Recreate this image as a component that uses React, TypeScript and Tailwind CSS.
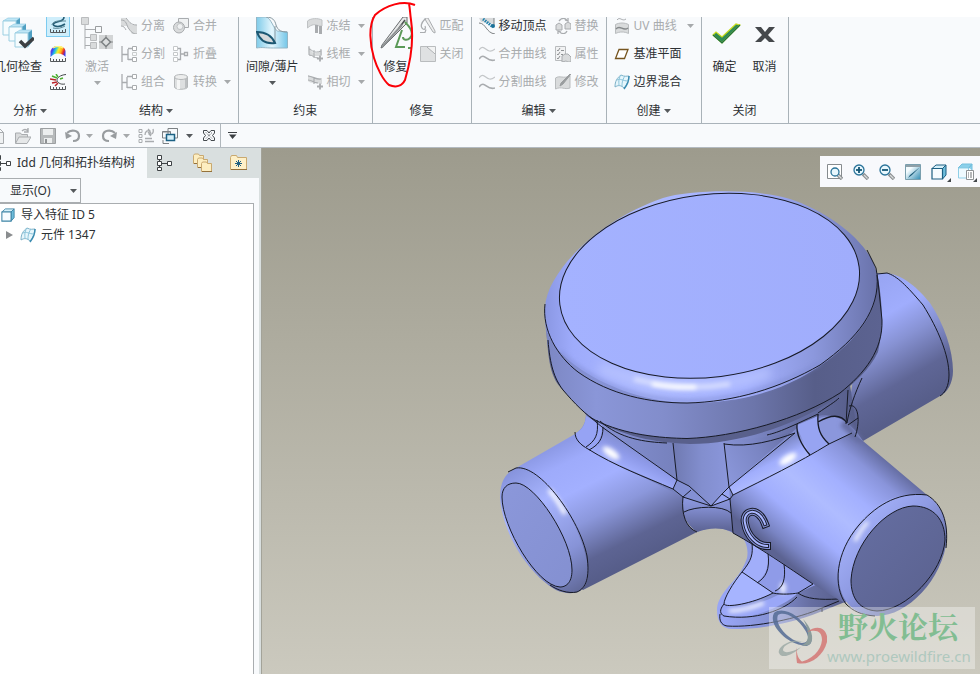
import React from "react";

type Kids = { children?: React.ReactNode };

const G = "#a9acaf";
const GL = "#d9dbdc";
const D = "#454a4e";
const T = "#1d5f82";

function Ico({ children, size = 16 }: Kids & { size?: number }) {
  return (
    <svg width={size} height={size} viewBox={`0 0 ${size} ${size}`} fill="none" className="block shrink-0" aria-hidden="true">
      {children}
    </svg>
  );
}

function Caret({ dim = false }: { dim?: boolean }) {
  return (
    <svg width="7" height="4" viewBox="0 0 7 4" className="block shrink-0" aria-hidden="true">
      <path d="M0 0h7L3.500 4z" fill={dim ? "#a6a9ab" : "#55595c"} />
    </svg>
  );
}

function Small({ icon, text, dim = true, caret = false }: { icon: React.ReactNode; text: string; dim?: boolean; caret?: boolean }) {
  return (
    <button type="button" className={`flex h-7 items-center gap-1 whitespace-nowrap ${dim ? "text-[#a9acae]" : "text-[#2d3134]"}`}>
      {icon}
      <span className={caret ? "mr-auto pr-[3px]" : ""}>{text}</span>
      {caret && <Caret dim={dim} />}
    </button>
  );
}

function Col({ children, wide = "" }: Kids & { wide?: string }) {
  return <div className={`-mt-[5px] flex flex-col ${wide}`}>{children}</div>;
}

function Big({ icon, text, dim = false, caret = false, wide = "min-w-8" }: { icon: React.ReactNode; text: string; dim?: boolean; caret?: boolean; wide?: string }) {
  return (
    <button type="button" className={`flex h-[74px] flex-col items-center whitespace-nowrap ${wide} ${dim ? "text-[#a9acae]" : "text-[#2d3134]"}`}>
      {icon}
      <span className="mt-2 leading-5">{text}</span>
      {caret && <span className="mt-1"><Caret dim={dim} /></span>}
    </button>
  );
}

function Group({ label, caret = false, body, foot = "", children }: Kids & { label: string; caret?: boolean; body: string; foot?: string }) {
  return (
    <section className="flex shrink-0 flex-col border-r border-[#a9b2b8]" aria-label={label}>
      <div className={`flex h-[82px] ${body}`}>{children}</div>
      <div className={`flex h-6 items-center justify-center gap-[3px] text-[#2d3134] ${foot}`}>
        {label}
        {caret && <Caret />}
      </div>
    </section>
  );
}

/* ---------- ribbon icons ---------- */

const GeometryCheck = () => (
  <Ico size={32}>
    {[[0, -3], [6, 3], [12, 9]].map(([x, y]) => (
      <g key={x} transform={`translate(${x} ${y})`}>
        <path d="M1 7l5-3h12l-4 3z" fill="#bfe6f5" stroke="#8cc8df" strokeWidth=".6" />
        <path d="M14 7l4-3v12l-4 5z" fill="#4f9fc2" />
        <path d="M1 7h13v14H1z" fill="#f6fcfe" stroke="#9ccfe2" />
      </g>
    ))}
    <path d="M18 24l5 5 9-8" stroke="#3c3f42" strokeWidth="3.500" />
  </Ico>
);

const Ruler = () => <path d="M.5 12v3.500h15V12M3.500 13v2M6.500 13v2M9.500 13v2M12.500 13v2" stroke="#54585b" />;

const Analysis1 = () => (
  <Ico>
    <path d="M14 0c0 4-4 4-7 5-4 1-5 3-2 4s7 0 10-2" stroke="#235b74" strokeWidth="1.600" />
    <path d="M16 4H9C5 4 2 6 2 8M3 11c4 1 9 0 12-2" stroke="#5d8797" />
    <Ruler />
  </Ico>
);

const Analysis2 = () => (
  <Ico>
    <defs>
      <linearGradient id="rainbow" x1="0" x2="1" y1=".3" y2=".6">
        <stop offset="0" stopColor="#a02ad0" />
        <stop offset=".15" stopColor="#3a4bef" />
        <stop offset=".32" stopColor="#20c6e8" />
        <stop offset=".5" stopColor="#f4f22a" />
        <stop offset=".7" stopColor="#ffb01a" />
        <stop offset=".85" stopColor="#e82a2a" />
        <stop offset="1" stopColor="#3a3bef" />
      </linearGradient>
    </defs>
    <path d="M.5 11V5C2 1 5 0 8 0s7 1 7.500 5v6C14 9 11 7.500 8 7.500S3 8.500 .5 11z" fill="url(#rainbow)" />
    <path d="M3 2c3-2 7-2 10 0" stroke="#fff47a" strokeWidth="1.200" />
    <Ruler />
  </Ico>
);

const Analysis3 = () => (
  <Ico>
    <path d="M16 .500C10 1 7 4 7 6s3 5 8 4" stroke="#44484b" />
    <path d="M6 0l2 3M2 2l5 2M13 4l-3 1" stroke="#4caf2e" strokeWidth="1.500" />
    <path d="M0 5l6 1M2 9l5-1M5 12l3-3" stroke="#b8242a" strokeWidth="1.500" />
    <Ruler />
  </Ico>
);

const Activate = () => (
  <Ico size={32}>
    <path d="M4 8v24M4 12.500h10M4 20.500h6M4 28.500h6" stroke={G} />
    <path d="M.5.500h7v7h-7zM9.500 17.500h6v6h-6zM9.500 25.500h6v6h-6z" fill={GL} stroke="#babcbe" />
    <path d="M14.500 9.500h6v6h-6z" fill="#f8fafc" stroke="#9a9d9f" />
    <path d="M18 18h14v14H18z" fill="#d3d5d6" />
    <path d="M25 18v14M18 25h14" stroke="#8d9092" />
    <path d="M25 20.500l4.500 4.500-4.500 4.500-4.500-4.500z" fill="#dcdedf" stroke="#7d8183" strokeWidth="1.500" />
  </Ico>
);

const Detach = () => (
  <Ico>
    <path d="M0 0h5l6 7h5v9h-5L6 8H0z" fill={GL} />
    <path d="M0 2c6 0 5 5 8 9s5 5 8 5M5 0c3 3 4 7 11 7M0 8c3 0 4 2 5 4" stroke={G} />
  </Ico>
);

const Split = () => (
  <Ico>
    <path d="M1 0v16M1 8.500h6M7 3v11M7 2.500h4M7 13.500h4" stroke={G} strokeWidth="1.300" />
    <path d="M11.500.500h4v4h-4zM11.500 11.500h4v4h-4z" fill="#fff" stroke={G} />
    <path d="M11.500 6.500h4v3h-4z" stroke="#c9cccd" />
  </Ico>
);

const Combine = () => (
  <Ico>
    <path d="M1 0v16M1 8.500h5M6 3v11M6 2.500h5M6 13.500h5" stroke={G} strokeWidth="1.300" />
    <path d="M11.500.500h4v4h-4zM11.500 11.500h4v4h-4z" fill="#fff" stroke={G} />
  </Ico>
);

const Merge = () => (
  <Ico>
    <path d="M5.500.500h10v9h-10z" fill="#eff1f2" stroke={G} />
    <circle cx="6" cy="9.500" r="5.500" fill={GL} stroke={G} />
    <circle cx="7" cy="8.500" r="3" fill="#eff1f2" stroke="#bfc2c4" />
  </Ico>
);

const Fold = () => (
  <Ico>
    <path d="M4 2.500h3.500v11H4M8 8h3" stroke={G} strokeWidth="1.300" />
    <path d="M.5.500h4v4h-4zM.5 6.500h4v3h-4zM.5 11.500h4v4h-4z" fill="#fff" stroke="#c5c8ca" />
    <path d="M11.500 6.500h3v3h-3z" fill="#fff" stroke={G} strokeWidth="1.300" />
  </Ico>
);

const Convert = () => (
  <Ico>
    <path d="M1.500 3v10c0 3 13 3 13 0V3z" fill="#dddfe0" stroke="#b4b7b9" />
    <path d="M4 4v11h3V4z" fill="#f5f6f6" />
    <path d="M12 4v10h2V4z" fill="#bcbfc1" />
    <ellipse cx="8" cy="3" rx="6.500" ry="2.500" fill="#eceded" stroke="#b4b7b9" />
  </Ico>
);

const Gap = () => (
  <Ico size={32}>
    <defs>
      <linearGradient id="gapfill" x1="0" x2="1">
        <stop offset="0" stopColor="#7fcbe9" />
        <stop offset=".5" stopColor="#e4f6fd" />
        <stop offset="1" stopColor="#74c6e8" />
      </linearGradient>
    </defs>
    <path d="M.5 0h10c5 2 7 12 11 14l10 1v16h-14C8 31 7 30 .5 31z" fill="url(#gapfill)" stroke="#94b6c5" />
    <path d="M10 0c6 0 9 3 10 8 2 6 6 7 11 7M19 9v17" stroke="#87989f" />
    <path d="M1 15c6 0 14 2 18 11C11 27 4 24 1 15z" fill="#d6dadc" stroke="#1c5873" strokeWidth="2" />
  </Ico>
);

const Freeze = () => (
  <Ico>
    <path d="M.5 3C4 0 11 0 15 2v6h-3C8 6 5 6 .5 10z" fill={GL} stroke="#bfc2c4" />
    <path d="M8 7h3v8H8zM12 8h3v8h-3z" fill={G} />
  </Ico>
);

const Plus = () => <path d="M13 9.500v6M10 12.500h6" stroke={G} strokeWidth="1.800" />;

const Wireframe = () => (
  <Ico>
    <path d="M1 1c4 0 2 5 6 6s5-2 8-3v6H9C5 11 2 9 2 9z" fill={GL} />
    <path d="M2 0v9c4 0 5 3 9 3M2 3c4 1 4 5 12 2M7 4v8M14 3v6" stroke={G} />
    <Plus />
  </Ico>
);

const Tangent = () => (
  <Ico>
    <path d="M1 1l4 2c4 2 6 1 10 1v6l-7-1C4 9 2 8 1 7z" fill={GL} />
    <path d="M1 2c5 0 8 4 13 3M1 6c4 0 6 3 10 3M7 3v7" stroke={G} strokeWidth="1.200" />
    <Plus />
  </Ico>
);

const Repair = () => (
  <Ico size={32}>
    <path d="M23 0h4v6L3 30l-2 1 1-3z" fill="#e7e9e9" stroke="#686c6e" />
    <path d="M25 3l-6 8" stroke="#4e5254" strokeWidth="1.500" />
    <path d="M22 8L2 30" stroke="#8e9294" strokeWidth="2" />
    <path d="M25 5c6 6 9 12 5 16-3 3-7 2-7-1M22 13l-6 17h9M28 31h4" stroke="#5b9a58" strokeWidth="2" />
  </Ico>
);

const Match = () => (
  <Ico>
    <path d="M5 1C1 5 0 9 3 11c2 1 3-1 2-3M0 14.500h5l1-3" stroke={G} strokeWidth="1.200" />
    <path d="M5 0h3l7 13v2l-2-1L6 3z" fill="#eceded" stroke={G} />
  </Ico>
);

const CloseSurf = () => (
  <Ico>
    <path d="M.5.500h15v15H.5z" fill="#dfe1e2" stroke="#b9bcbe" />
    <path d="M7 1l8 8V1z" fill="#f2f3f3" />
    <path d="M7 1l8 7" stroke={G} />
  </Ico>
);

const MoveVertex = () => (
  <Ico>
    <path d="M0 0h15v6L2 4z" fill="#d8dadb" />
    <path d="M0 5c7 0 7 10 16 11M15 0v7" stroke="#7d8183" />
    <path d="M4 1l10 8" stroke="#1f7fab" strokeWidth="3" strokeDasharray="1.500 1" />
    <circle cx="14" cy="8" r="2" fill="#1b6f97" />
  </Ico>
);

const Waves = () => (
  <Ico>
    <path d="M0 4c6-8 7 6 16-1" stroke="#c4c7c9" strokeWidth="1.200" />
    <path d="M0 13c6-8 7 4 16 1" stroke={G} strokeWidth="1.600" />
  </Ico>
);

const Replace = () => (
  <Ico>
    <path d="M1 7l3-2 3 2v5H1zM10 6l3-2 3 2v5h-6z" fill={GL} stroke={G} />
    <path d="M4 3c3-4 7-3 8 0M12 13c-2 4-6 3-8 0M10 2l3 1V0M6 14l-3-1v3" stroke={G} strokeWidth="1.300" />
  </Ico>
);

const Property = () => (
  <Ico>
    <path d="M.5.500h10v14H.5z" fill="#f1f2f3" stroke="#b9bcbe" />
    <path d="M2 4l1 1 2-3M2 8l1 1 2-3M2 12l1 1 2-3M6 4.500h3M6 8.500h2" stroke="#8f9294" />
    <path d="M7 10l3-2h3l3 3v5h-3l-2-1-4 1z" fill={GL} stroke={G} />
  </Ico>
);

const Modify = () => (
  <Ico>
    <path d="M.5 4C5 1 8 5 15 2v12c-6 2-8-2-14.500 1z" fill={GL} stroke="#b9bcbe" />
    <path d="M16 0L8 10l-3 2 1-3 9-9" fill="#9a9d9f" stroke="#9a9d9f" />
  </Ico>
);

const UVCurve = () => (
  <Ico>
    <path d="M3 2c3-4 5 2 9-1" stroke={G} />
    <path d="M1.500 6.500c4-2 9-2 13 0v9c-4-2-9-2-13 0z" fill={GL} stroke="#b9bcbe" />
    <path d="M2 11c4-5 7 3 12-1" stroke="#85898b" strokeWidth="1.300" />
  </Ico>
);

const DatumPlane = () => (
  <Ico>
    <path d="M5 3.500h9L10.500 12.500h-9z" fill="#fff" stroke="#76551f" strokeWidth="1.300" />
  </Ico>
);

const Blend = () => (
  <Ico>
    <path d="M1 13C1 7 3 4 7 1c4 2 5 1 8 1-1 5-1 8-5 12-3-3-6-3-9-1z" fill="#e6f6fc" stroke="#7fb2c8" />
    <path d="M15 2c0 5-1 8-5 13" stroke="#3a8bb0" strokeWidth="1.500" />
    <path d="M3 6c3-2 6 1 11 1M7 1c-3 4-2 8-2 11M11 2c-3 4-3 8-3 11" stroke="#8ac3da" />
  </Ico>
);

const Confirm = () => (
  <Ico size={32}>
    <path d="M4 18l3-3 6 5L27 7l4 1-18 18z" fill="#2f8a55" stroke="#c8dc1c" strokeWidth="1.200" />
    <path d="M31 8L13 26 4 18" stroke="#1f7043" strokeWidth="1.200" />
  </Ico>
);

const Cancel = () => (
  <Ico size={32}>
    <path d="M6 10h6l4 5 4-5h6l-7 8 7 7h-6l-4-4-4 4H6l7-7z" fill="#45484b" />
  </Ico>
);

/* ---------- quick access and tree icons ---------- */

const Windows = () => (
  <Ico>
    <path d="M6 .500h9.500V10H6zM.5 3.500h8V10h-8z" fill="#f8fafc" stroke="#7c8184" />
    <path d="M6.500.500h9M.5 4h8" stroke="#7c8184" />
    <path d="M4.500 6.500h8v6h-8z" fill="#d6f0fa" stroke="#1b6184" strokeWidth="1.500" />
    <path d="M1 12v3.500h6" stroke="#7c8184" />
  </Ico>
);

const TreeIcon = () => (
  <Ico>
    <path d="M3.500 4v8M6 8.500h5" stroke="#3e4245" />
    <path d="M1.500.500h4v4h-4zM1.500 6.500h4v4h-4zM1.500 12.500h4v3h-4zM11.500 6.500h4v4h-4z" fill="#fff" stroke="#3e4245" />
  </Ico>
);

const Folders = () => (
  <Ico size={20}>
    {[0, 4, 8].map((n) => (
      <g key={n} transform={`translate(${n - 1} ${n})`}>
        <path d="M1.500 2.500l1-1.500h4l1 1.500h4v8h-10z" fill="#fdeec1" stroke="#c9a970" />
        <path d="M2 10.500h10" stroke="#94713b" />
      </g>
    ))}
  </Ico>
);

const Cube = ({ s = 13, edge = T }: { s?: number; edge?: string }) => (
  <svg width={s} height={s} viewBox="0 0 16 16" fill="none" className="block shrink-0" aria-hidden="true">
    <path d="M1 4.500l4-3.500h10l-3.500 3.500z" fill="#d5f0fa" stroke={edge} />
    <path d="M11.500 4.500L15 1v10l-3.500 4z" fill="#6ebddb" stroke={edge} />
    <path d="M1 4.500h10.500V15H1z" fill="#f6fcff" stroke={edge} strokeWidth="1.200" />
  </svg>
);

function Lens({ kind }: { kind: "fit" | "in" | "out" }) {
  const c = kind === "fit" ? 8 : 6;
  return (
    <Ico>
      {kind === "fit" && <path d="M.5.500h14v14H.5z" fill="#fff" stroke="#868b8e" />}
      <path d="M10 10l5 5" stroke="#8a8e90" strokeWidth="3.500" />
      <path d="M11 11l3.500 3.500" stroke="#d9dbdc" strokeWidth="1.200" />
      <circle cx={c} cy={c} r={kind === "fit" ? 4 : 5} fill="#e8f7fd" stroke="#2a7399" strokeWidth="1.300" />
      {kind !== "fit" && <path d="M3 6h6" stroke="#155675" strokeWidth="1.800" />}
      {kind === "in" && <path d="M6 3v6" stroke="#155675" strokeWidth="1.800" />}
    </Ico>
  );
}

const Repaint = () => (
  <Ico>
    <defs>
      <linearGradient id="repaintfill" x1="0" x2="1" y2="1">
        <stop offset=".3" stopColor="#f3fbfe" />
        <stop offset="1" stopColor="#2f8bb2" />
      </linearGradient>
    </defs>
    <path d="M.5.500h15v15H.5z" fill="url(#repaintfill)" stroke="#7a9fae" />
    <path d="M1 2h14" stroke="#8fa0a8" strokeWidth="2" />
    <path d="M15 3L7 11l-4 3 2-3z" fill="#1a5a78" />
  </Ico>
);

const Display = () => (
  <Ico size={18}>
    <path d="M1 5l4-4h10l-3 4zM12 5l3-4v6" fill="#8bd0ea" stroke="#74bfdd" />
    <path d="M1.500 5h10v10h-10z" fill="#effaff" stroke="#8fcfe7" />
    <path d="M9.500 7.500h7v9h-7z" fill="#fff" stroke="#8d9194" />
    <path d="M11 10h1M13 10h2M11 12h1M13 12h2M11 14h1M13 14h2" stroke="#6b6f72" />
  </Ico>
);

function QBtn({ label, children }: Kids & { label: string }) {
  return <button type="button" aria-label={label} className="flex h-5 shrink-0 items-center">{children}</button>;
}

/* ---------- the shaded solid ---------- */

const MARK = "M765 524C758 505 742 511 745 523C747 536 757 546 767 546";

function Model() {
  return (
    <svg viewBox="262 148 718 526" preserveAspectRatio="xMinYMin slice" className="block h-full w-full" role="img" aria-label="几何模型">
      <defs>
        <linearGradient id="cylL" gradientUnits="userSpaceOnUse" x1="545" y1="452" x2="607" y2="576">
          <stop offset="0" stopColor="#8d9ae6" /><stop offset=".14" stopColor="#9eabfb" /><stop offset=".35" stopColor="#a3b0ff" />
          <stop offset=".58" stopColor="#8b97db" /><stop offset=".84" stopColor="#5d6493" /><stop offset="1" stopColor="#565d89" />
        </linearGradient>
        <linearGradient id="cylR" gradientUnits="userSpaceOnUse" x1="890" y1="462" x2="798" y2="571">
          <stop offset="0" stopColor="#636b9f" /><stop offset=".14" stopColor="#8994da" /><stop offset=".34" stopColor="#a3b0ff" />
          <stop offset=".52" stopColor="#afbcff" /><stop offset=".72" stopColor="#a1aefe" /><stop offset=".9" stopColor="#7984c3" /><stop offset="1" stopColor="#5c6392" />
        </linearGradient>
        <linearGradient id="cylB" gradientUnits="userSpaceOnUse" x1="885" y1="273" x2="951" y2="386">
          <stop offset="0" stopColor="#98a5f3" /><stop offset=".28" stopColor="#a0adfd" /><stop offset=".5" stopColor="#8792d3" />
          <stop offset=".78" stopColor="#5f6696" /><stop offset="1" stopColor="#575e8a" />
        </linearGradient>
        <linearGradient id="side" gradientUnits="userSpaceOnUse" x1="546" y1="0" x2="882" y2="0">
          <stop offset="0" stopColor="#7c87c3" /><stop offset=".15" stopColor="#8a96d8" /><stop offset=".35" stopColor="#828dcb" />
          <stop offset=".62" stopColor="#6c75aa" /><stop offset=".8" stopColor="#575e89" /><stop offset="1" stopColor="#5c6391" />
        </linearGradient>
        <linearGradient id="rim" gradientUnits="userSpaceOnUse" x1="546" y1="0" x2="880" y2="0">
          <stop offset="0" stopColor="#8b98e4" /><stop offset=".08" stopColor="#9eabfb" /><stop offset=".3" stopColor="#acb9ff" />
          <stop offset=".6" stopColor="#a4b1ff" /><stop offset=".8" stopColor="#8c98dd" /><stop offset="1" stopColor="#6871a8" />
        </linearGradient>
        <linearGradient id="top" x1="0" x2="1"><stop offset="0" stopColor="#a4b2ff" /><stop offset="1" stopColor="#a0adfc" /></linearGradient>
        <linearGradient id="faceL" x1="0" x2="1" y2="1"><stop offset="0" stopColor="#8b97da" /><stop offset="1" stopColor="#8490d1" /></linearGradient>
        <linearGradient id="faceR" x1="0" x2="1" y2="1"><stop offset="0" stopColor="#666fa3" /><stop offset="1" stopColor="#5a618e" /></linearGradient>
        <linearGradient id="ringL" gradientUnits="userSpaceOnUse" x1="505" y1="475" x2="580" y2="593">
          <stop offset="0" stopColor="#8693dc" /><stop offset=".3" stopColor="#a8b5ff" /><stop offset=".7" stopColor="#8793d7" /><stop offset="1" stopColor="#5f6796" />
        </linearGradient>
        <linearGradient id="ringR" gradientUnits="userSpaceOnUse" x1="850" y1="510" x2="940" y2="590">
          <stop offset="0" stopColor="#a9b6ff" /><stop offset=".45" stopColor="#8f9be3" /><stop offset="1" stopColor="#565d89" />
        </linearGradient>
        <linearGradient id="neck" gradientUnits="userSpaceOnUse" x1="590" y1="0" x2="860" y2="0">
          <stop offset="0" stopColor="#8793d6" /><stop offset=".3" stopColor="#7782be" /><stop offset=".5" stopColor="#8a96da" />
          <stop offset=".75" stopColor="#6871a7" /><stop offset="1" stopColor="#555c87" />
        </linearGradient>
        <linearGradient id="web" gradientUnits="userSpaceOnUse" x1="673" y1="0" x2="730" y2="0">
          <stop offset="0" stopColor="#6f79b1" /><stop offset=".5" stopColor="#828ece" /><stop offset="1" stopColor="#8b97dc" />
        </linearGradient>
        <linearGradient id="webR" gradientUnits="userSpaceOnUse" x1="725" y1="470" x2="795" y2="433">
          <stop offset="0" stopColor="#8a96d9" /><stop offset=".5" stopColor="#7a85c3" /><stop offset="1" stopColor="#636b9f" />
        </linearGradient>
        <linearGradient id="saddleR" gradientUnits="userSpaceOnUse" x1="768" y1="450" x2="780" y2="474">
          <stop offset="0" stopColor="#7f8bcb" /><stop offset=".5" stopColor="#a1aefd" /><stop offset="1" stopColor="#b0bcff" />
        </linearGradient>
        <linearGradient id="saddleL" gradientUnits="userSpaceOnUse" x1="645" y1="448" x2="632" y2="474">
          <stop offset="0" stopColor="#808ccd" /><stop offset=".5" stopColor="#8f9bea" /><stop offset="1" stopColor="#a3b0ff" />
        </linearGradient>
        <linearGradient id="arch" gradientUnits="userSpaceOnUse" x1="0" y1="490" x2="0" y2="532">
          <stop offset="0" stopColor="#97a4f0" /><stop offset=".45" stopColor="#808bcd" /><stop offset="1" stopColor="#5b6291" />
        </linearGradient>
        <linearGradient id="foot" gradientUnits="userSpaceOnUse" x1="725" y1="0" x2="840" y2="0">
          <stop offset="0" stopColor="#98a5f5" /><stop offset=".4" stopColor="#8591d4" /><stop offset=".75" stopColor="#666ea1" /><stop offset="1" stopColor="#5a618f" />
        </linearGradient>
        <filter id="soft" filterUnits="userSpaceOnUse" x="490" y="180" width="480" height="460"><feGaussianBlur stdDeviation="2" /></filter>
        <filter id="soft2" filterUnits="userSpaceOnUse" x="490" y="180" width="480" height="460"><feGaussianBlur stdDeviation="5" /></filter>
      </defs>

      {/* rear cylinder */}
      <path d="M870 273L887 273C900 275 914 283 930 303C944 324 953 350 953 371C953 383 947 393 940 396L863 441L845 430z" fill="url(#cylB)" />
      <path d="M877 274L887 273C897 276 906 285 923 305C938 329 949 355 949 375C949 386 945 393 940 396" fill="none" stroke="#171a26" />

      {/* foot */}
      <path d="M738 530C745 540 749 547 747 558C742 572 736 578 728 587C720 597 717 603 717 610C717 623 723 629 732 629C755 630 790 624 820 612L845 602L800 560z" fill="url(#foot)" />
      <path d="M742 572C750 565 753 552 752 541L800 570L820 583L798 593L773 593z" fill="#8f9be8" />
      <path d="M768 550C770 570 763 577 757 583L742 572C752 562 753 552 752 541z" fill="#a1aefa" />
      <path d="M742 572L773 593C755 602 740 605 726 606C720 602 733 579 742 572z" fill="#a6b4ff" />
      <path d="M726 608C745 608 765 602 780 594L798 593C786 605 755 618 737 617C726 617 719 615 720 608z" fill="#9aa7f7" />
      <path d="M729 611C742 611 753 607 764 603" stroke="#fff" strokeWidth="3" fill="none" filter="url(#soft)" />
      <ellipse cx="783" cy="588" rx="3" ry="6" fill="#eef1ff" filter="url(#soft)" />
      <g fill="none" stroke="#171a26">
        <path d="M752 543C753 554 752 560 742 572C733 583 724 598 724 604C726 608 752 604 773 593L742 572" />
        <path d="M773 593C782 595 792 594 798 593L813 584M768 553C770 570 766 577 757 583M784 564C786 579 783 588 775 591" />
        <path d="M724 604C719 610 720 614 724 616C755 621 785 610 797 597M798 593C806 599 820 600 838 599" />
        <path d="M720 614C719 620 721 625 727 626C755 628 800 618 822 608L839 601M822 608V612" />
      </g>

      {/* neck and central web */}
      <path d="M585 410C588 420 583 429 575 434L590 470L680 500L684 515L697 532C707 528 716 527 724 529L750 540L860 450L850 385z" fill="url(#neck)" />
      <path d="M673 441H724L730 488L711 506L689 487L677 480z" fill="url(#web)" />
      <path d="M724 441L767 437L795 432L729 487z" fill="url(#webR)" />
      <path d="M677 480L689 486L711 506L683 497L673 489z" fill="#8390d4" />
      <path d="M680 496L711 506L731 499L745 540C728 526 712 527 697 532C686 525 681 512 680 496z" fill="url(#arch)" />
      <path d="M711 506L722 494L729 487L734 494L730 499z" fill="#99a6f3" />

      {/* left cylinder */}
      <path d="M516 468L575 434L588 449C615 465 647 478 683 497C682 515 687 528 697 532L583 590L550 570z" fill="url(#cylL)" />
      <path d="M586 416C585 427 581 430 575 434C577 441 582 445 588 449C620 467 648 477 673 489L677 480L602 425z" fill="url(#saddleL)" />
      <path d="M586 416C585 427 581 430 575 434C577 441 582 445 588 449C599 443 603 435 602 425z" fill="#96a3f4" />
      <ellipse cx="611" cy="453" rx="10" ry="4" transform="rotate(35 611 453)" fill="#fff" filter="url(#soft)" />
      <path d="M516 468C503 474 500 485 500 498C503 537 531 576 556 590C565 594 574 594 580 591C588 586 589 575 588 567C584 536 555 479 524 468z" fill="url(#ringL)" />
      <path d="M549 490C556 498 561 506 565 514" stroke="#fff" strokeWidth="4" fill="none" filter="url(#soft)" />
      <path d="M516 483C535 483 572 539 572 570C572 584 565 587 560 587C537 586 502 527 502 497C502 488 507 483 516 483z" fill="url(#faceL)" stroke="#171a26" />
      <path d="M508 472L516 468C540 464 580 520 587 556C590 578 586 588 577 592C568 594 557 590 550 585" fill="none" stroke="#171a26" />

      {/* right cylinder */}
      <path d="M729 487L795 432L818 416C835 412 848 420 863 441L927 495L845 603C810 585 775 555 733 533z" fill="url(#cylR)" />
      <path d="M818 419C830 413 847 416 863 441L852 433L829 444C821 435 818 430 818 419z" fill="#8b97dc" />
      <path d="M846 418L863 441L858 442L840 426z" fill="#666ea3" filter="url(#soft)" />
      <path d="M797 425L818 416C818 430 821 437 829 444L810 455C802 445 797 436 797 425z" fill="#97a4f2" />
      <path d="M733 495L729 487L797 428L810 455z" fill="url(#saddleR)" />
      <ellipse cx="788" cy="459" rx="10" ry="4" transform="rotate(-32 788 459)" fill="#fff" filter="url(#soft)" />
      <path d="M927 495C944 506 947 524 947 538C943 580 907 616 877 616C852 615 839 600 839 575C840 533 877 493 913 495z" fill="url(#ringR)" />
      <path d="M855 541C859 533 863 527 868 522" stroke="#fff" strokeWidth="3" fill="none" filter="url(#soft)" />
      <path d="M913 506C934 506 945 520 945 540C943 572 906 611 877 611C860 610 851 599 851 580C853 544 886 507 913 506z" fill="url(#faceR)" stroke="#171a26" />
      <path d="M927 495C895 491 873 509 859 525C835 553 833 587 846 604C853 611 861 615 875 616M927 495C942 504 949 522 946 548" fill="none" stroke="#171a26" />

      {/* cap */}
      <path d="M546 320C548 370 552 380 566 393C578 403 582 412 590 418C630 440 665 443 690 444C740 444 795 425 833 400C855 383 870 369 878 352C884 325 882 300 878 278z" fill="#59608c" />
      <path d="M545 320C548 355 552 375 563 390C574 403 587 416 595 420C625 435 660 438 687 438.500C735 437 800 419 840 393C865 373 883 350 882 320L877 277z" fill="url(#side)" />
      <path d="M545 307C547 272 597 221 663 198C690 190 755 188 790 199C830 212 875 246 877 277C882 323 835 359 800 378C765 396 730 403 687 403C622 401 563 365 550 338C545 328 544 318 545 307z" fill="url(#rim)" />
      <path d="M560 352C600 390 650 400 687 401C735 400 780 386 820 363" stroke="#7f8bd0" strokeWidth="4" fill="none" filter="url(#soft)" opacity=".6" />
      <path d="M600 368C650 389 720 392 770 372" stroke="#b9c4ff" strokeWidth="8" fill="none" filter="url(#soft2)" />
      <path d="M634 379C665 387 700 389 730 384" stroke="#d5dcff" strokeWidth="5" fill="none" filter="url(#soft)" />
      <path d="M652 384C668 387 680 388 696 387" stroke="#fff" strokeWidth="4" fill="none" filter="url(#soft)" />
      <ellipse cx="709.500" cy="285.800" rx="150.800" ry="91.300" transform="rotate(-7.200 709.500 285.800)" fill="url(#top)" stroke="#171a26" />
      <g fill="none" stroke="#171a26">
        <path d="M545 304C542 330 557 356 578 372C610 395 650 403 687 403C735 402 780 388 820 365C858 338 880 310 877 275" />
        <path d="M548 340C550 365 554 378 563 390C574 403 587 416 595 420C625 435 660 438 687 438.500C735 437 800 419 840 393C865 373 883 350 882 320L878 281L876 268L867 250" />
      </g>

      {/* feature edges */}
      <g fill="none" stroke="#171a26">
        <path d="M575 432C575 440 581 445 588 449C615 466 645 477 673 489L683 497C681 514 686 528 697 532" />
        <path d="M590 417L602 427L677 480L689 486L711 506L683 497L691 490M673 489L677 480L673 443" />
        <path d="M597 420C599 435 595 441 586 447M603 427C603 440 598 445 589 450M600 421C620 439 645 442 667 443" />
        <path d="M684 512C695 506 723 505 731 513M711 506L722 494L729 487L795 433M711 506L730 499L733 495L729 487L724 443M722 494L730 499L733 533" />
        <path d="M733 495C765 479 798 463 829 444L852 433M724 444C750 448 775 440 795 433M767 435C780 432 790 427 818 414" />
        <path d="M797 424C796 437 803 447 810 455M818 414C817 428 820 436 829 444M818 422C830 415 841 414 847 423" strokeWidth="1.300" />
        <path d="M848 390L846 424M862 378C855 393 849 410 847 423M849 406C858 403 861 420 855 437M848 425L858 418M818 413C828 406 835 402 839 398" />
        <path d="M733 533C762 549 786 566 813 584" />
      </g>
      {/* embossed mark on the cylinder */}
      <g fill="none" strokeLinecap="square">
        <path d={MARK} stroke="#171a26" strokeWidth="8" />
        <path d={MARK} stroke="#8793d9" strokeWidth="6" />
        <path d={MARK} stroke="#1d2133" strokeWidth="4" />
        <path d={MARK} stroke="#a9b6ff" strokeWidth="2" />
      </g>
    </svg>
  );
}

export default function App() {
  return (
    <div
      className="relative flex h-screen min-h-[480px] flex-col overflow-hidden bg-white text-[12px] leading-4 text-[#2d3134]"
      style={{ fontFamily: '"Noto Sans", "Noto Sans CJK SC", sans-serif' }}
    >
      {/* ribbon */}
      <header className="mt-[17px] flex shrink-0 overflow-hidden border-b border-[#aab3ba] bg-[#f8fafc]">
        <Group label="分析" caret body="gap-1 pr-[3px]" foot="pr-[13px]">
          <div className="-ml-[6px] flex">
            <Big icon={<GeometryCheck />} text="几何检查" />
          </div>
          <div className="-mt-[5px] flex flex-col">
            <button type="button" aria-label="曲率" className="flex h-[25px] w-6 items-center justify-center border border-[#7ccbf0] bg-[#cfeefb]"><Analysis1 /></button>
            <button type="button" aria-label="着色" className="mt-[3px] flex h-7 w-6 items-center justify-center"><Analysis2 /></button>
            <button type="button" aria-label="偏差" className="flex h-7 w-6 items-center justify-center"><Analysis3 /></button>
          </div>
        </Group>
        <Group label="结构" caret body="gap-2 px-[7px]">
          <Big icon={<Activate />} text="激活" dim caret />
          <Col>
            <Small icon={<Detach />} text="分离" />
            <Small icon={<Split />} text="分割" />
            <Small icon={<Combine />} text="组合" />
          </Col>
          <Col>
            <Small icon={<Merge />} text="合并" />
            <Small icon={<Fold />} text="折叠" />
            <Small icon={<Convert />} text="转换" caret />
          </Col>
        </Group>
        <Group label="约束" body="gap-2 px-[7px]">
          <Big icon={<Gap />} text="间隙/薄片" caret />
          <Col>
            <Small icon={<Freeze />} text="冻结" caret />
            <Small icon={<Wireframe />} text="线框" caret />
            <Small icon={<Tangent />} text="相切" caret />
          </Col>
        </Group>
        <Group label="修复" body="gap-2 px-[7px]">
          <Big icon={<Repair />} text="修复" />
          <Col>
            <Small icon={<Match />} text="匹配" />
            <Small icon={<CloseSurf />} text="关闭" />
          </Col>
        </Group>
        <Group label="编辑" caret body="gap-2 px-[7px]">
          <Col>
            <Small icon={<MoveVertex />} text="移动顶点" dim={false} />
            <Small icon={<Waves />} text="合并曲线" />
            <Small icon={<Waves />} text="分割曲线" />
          </Col>
          <Col>
            <Small icon={<Replace />} text="替换" />
            <Small icon={<Property />} text="属性" />
            <Small icon={<Modify />} text="修改" />
          </Col>
        </Group>
        <Group label="创建" caret body="px-[7px]">
          <Col wide="min-w-20">
            <Small icon={<UVCurve />} text="UV 曲线" caret />
            <Small icon={<DatumPlane />} text="基准平面" dim={false} />
            <Small icon={<Blend />} text="边界混合" dim={false} />
          </Col>
        </Group>
        <Group label="关闭" body="px-[3px]">
          <Big icon={<Confirm />} text="确定" wide="w-10" />
          <Big icon={<Cancel />} text="取消" wide="w-10" />
        </Group>
      </header>

      {/* quick access bar */}
      <nav className="flex h-6 shrink-0 items-center border-b border-[#b3bac0] bg-[#f8fafc]" aria-label="快速访问">
        <div className="-ml-[10px] flex items-center gap-[9px]">
          <QBtn label="新建"><Ico><path d="M1.500.500h8l4 4v11h-12zM9.500.500v4h4" fill="#eff1f2" stroke={G} /></Ico></QBtn>
          <QBtn label="打开"><Ico><path d="M.5 15V5h5l1 1.500h6V9" fill={GL} stroke={G} /><path d="M.5 15.500L4 9h12l-4 6.500z" fill="#e6e8e9" stroke={G} /><path d="M7 3c2-2 4-2 6 0M13 0v4h-4" stroke={G} strokeWidth="1.400" /></Ico></QBtn>
          <QBtn label="保存"><Ico><path d="M.5.500h15v15H.5z" fill="#b7babb" stroke="#9da0a2" /><path d="M3 1h10v6H3zM4 10h8v5H4z" fill="#eceeee" /><path d="M5 11h2v4H5z" fill="#8f9294" /></Ico></QBtn>
          <QBtn label="撤消"><Ico><path d="M2 5c4-4 12-3 12 3 0 4-3 5-6 5" stroke="#989c9f" strokeWidth="2.200" /><path d="M0 4l1 7 6-3z" fill="#989c9f" /></Ico></QBtn>
        </div>
        <div className="ml-[5px] flex items-center gap-2">
          <Caret dim />
          <QBtn label="重做"><Ico><path d="M14 5C10 1 2 2 2 8c0 4 3 5 6 5" stroke="#989c9f" strokeWidth="2.200" /><path d="M16 4l-1 7-6-3z" fill="#989c9f" /></Ico></QBtn>
          <span className="-ml-[2px]"><Caret dim /></span>
          <QBtn label="重新生成"><Ico><path d="M1 1.500h3v3H1zM1 6.500h3v3H1zM1 11.500h3v3H1z" stroke={G} /><path d="M7 10.500h7M7 13.500h9M7 7c0-4 3-5 5-4M15 1c1 4-1 6-4 5M10 1l2 2-2 2M13 4l-2 2 2 2" stroke={G} strokeWidth="1.300" /></Ico></QBtn>
          <QBtn label="窗口"><Windows /></QBtn>
          <Caret />
        </div>
        <span className="ml-[10px]">
          <QBtn label="关闭窗口"><svg width="12" height="11" viewBox="0 0 12 11" fill="none"><path d="M.5.500h3.500l2 2.500L8 .500h3.500V3L9.500 5.500l2 2.500v2.500H8L6 8l-2 2.500H.5V8l2-2.500L.5 3z" stroke={D} /><path d="M3 2.500l6 6M9 2.500l-6 6" stroke={D} strokeDasharray="1 1" /></svg></QBtn>
        </span>
        <span className="ml-[5px] h-full border-l border-[#b0b7bc]" />
        <span className="ml-[7px]">
          <QBtn label="自定义"><svg width="9" height="7" viewBox="0 0 9 7"><path d="M0 0h9v1H0zM1 2.500h7.500L4.500 7z" fill="#3b3f42" /></svg></QBtn>
        </span>
      </nav>

      <div className="flex min-h-0 flex-1">
        {/* structure tree */}
        <aside className="flex w-[262px] shrink-0 flex-col border-r border-[#a3a399] bg-[#d9dfdf] pr-[2px]">
          <div className="flex h-[30px] shrink-0 items-center" role="tablist">
            <button type="button" role="tab" aria-selected="true" className="-ml-[5px] flex h-full w-[152px] shrink-0 items-center gap-[6px] whitespace-nowrap bg-[#f8fafc]">
              <TreeIcon />
              Idd 几何和拓扑结构树
            </button>
            <button type="button" role="tab" aria-selected="false" aria-label="模型树" className="ml-[9px]"><TreeIcon /></button>
            <button type="button" role="tab" aria-selected="false" aria-label="文件夹" className="ml-[21px]"><Folders /></button>
            <button type="button" role="tab" aria-selected="false" aria-label="收藏夹" className="ml-[17px]">
              <Ico size={18}>
                <path d="M.5 3.500l1-2h5l1 2h9v12H.5z" fill="#fef0c8" stroke="#c9a970" />
                <path d="M1 15.500h16" stroke="#94713b" />
                <path d="M8.500 6v7M5 9.500h7M6 7l5 5M11 7l-5 5" stroke={T} />
              </Ico>
            </button>
          </div>
          <div className="flex min-h-0 flex-1 flex-col bg-[#f8fafc] pr-[5px]">
            <div className="grid w-[81px] shrink-0 items-center">
              <select aria-label="显示" defaultValue="show" className="col-start-1 row-start-1 h-[25px] w-full appearance-none border border-l-0 border-[#a9adb0] bg-[#f8fafc] pl-[10px]">
                <option value="show">显示(O)</option>
              </select>
              <span className="pointer-events-none col-start-1 row-start-1 mr-1 justify-self-end"><Caret /></span>
            </div>
            <ul className="min-h-0 flex-1 border-r border-t border-[#a9adb0] bg-white pt-px">
              <li className="flex h-5 items-center gap-[6px] pl-px"><Cube edge="#3d84a5" s={14} />导入特征 ID 5</li>
              <li className="flex h-5 items-center pl-[6px]">
                <button type="button" aria-label="展开" className="mr-[7px]"><svg width="7" height="8" viewBox="0 0 7 8" className="block"><path d="M0 0l7 4-7 4z" fill="#8a8d8f" /></svg></button>
                <span className="mr-[5px]"><Blend /></span>元件 1347
              </li>
            </ul>
          </div>
        </aside>

        {/* graphics area */}
        <main className="relative min-w-0 flex-1 bg-linear-to-b from-[#9d9b8d] to-[#cbc9be]">
          <Model />
          <div className="absolute right-0 top-2 flex h-[31px] items-center gap-[10px] bg-[#f8f9fc] pl-[7px] pr-[7px]" role="toolbar" aria-label="视图">
            <QBtn label="重新调整"><Lens kind="fit" /></QBtn>
            <QBtn label="放大"><Lens kind="in" /></QBtn>
            <QBtn label="缩小"><Lens kind="out" /></QBtn>
            <QBtn label="重画"><Repaint /></QBtn>
            <div className="-mr-1 flex items-center"><QBtn label="显示样式"><Cube s={16} /></QBtn><svg width="4" height="4" className="mt-4"><path d="M4 0v4H0z" fill="#44484b" /></svg></div>
            <div className="-mr-1 flex items-center"><QBtn label="显示过滤器"><Display /></QBtn><svg width="4" height="4" className="-ml-[2px] mt-4"><path d="M4 0v4H0z" fill="#44484b" /></svg></div>
          </div>
          <div className="absolute bottom-[5px] right-[5px] flex h-[62px] w-[206px] items-center bg-white/35">
            <svg width="58" height="62" viewBox="0 0 58 62" fill="none" className="shrink-0" aria-hidden="true">
              <path fillRule="evenodd" d="M5 6C14-1 31 8 41 25C46 37 39 41 32 38C16 35-1 17 5 6zM9 8C5 17 19 33 33 36C41 36 40 29 36 23C28 10 15 4 9 8z" fill="#546b94" opacity=".85" />
              <path d="M34 12C42 20 46 32 41 37C37 40 32 38 32 38C41 37 41 24 34 12z" fill="#8b9c9b" />
              <path fillRule="evenodd" d="M35 35C22 30 8 40 10 46C13 53 25 47 32 40C24 45 15 47 14 43C14 38 24 33 35 35z" fill="#9aa8a4" opacity=".8" />
              <path d="M38 25C49 16 60 22 58 35C54 50 40 59 28 56C43 53 52 44 53 33C53 24 47 22 38 25zM28 40C27 48 30 54 36 56L28 56C27 50 27 44 28 40z" fill="#d37774" opacity=".85" />
            </svg>
            <div className="flex flex-col whitespace-nowrap">
              <span className="ml-[11px] text-[30px] font-bold leading-[36px] text-[#82bd92]" style={{ fontFamily: '"Liberation Serif", "Noto Serif CJK SC", "Noto Sans CJK SC", serif' }}>野火论坛</span>
              <a href="#" className="text-[15px] leading-5 text-[#afc8be]">www.proewildfire.cn</a>
            </div>
          </div>
        </main>
      </div>

      {/* hand-drawn marker around the repair command */}
      <svg width="50" height="92" viewBox="366 0 50 92" fill="none" className="pointer-events-none absolute left-[366px] top-0" aria-hidden="true">
        <path d="M415 5C403 0 386 5 375 15C368 26 370 45 374 58C377 68 383 80 389 85C396 88 402 86 405 80C411 60 414 40 411 20C410 13 410 8 409 4" stroke="#fb0007" strokeWidth="2" />
      </svg>
    </div>
  );
}
